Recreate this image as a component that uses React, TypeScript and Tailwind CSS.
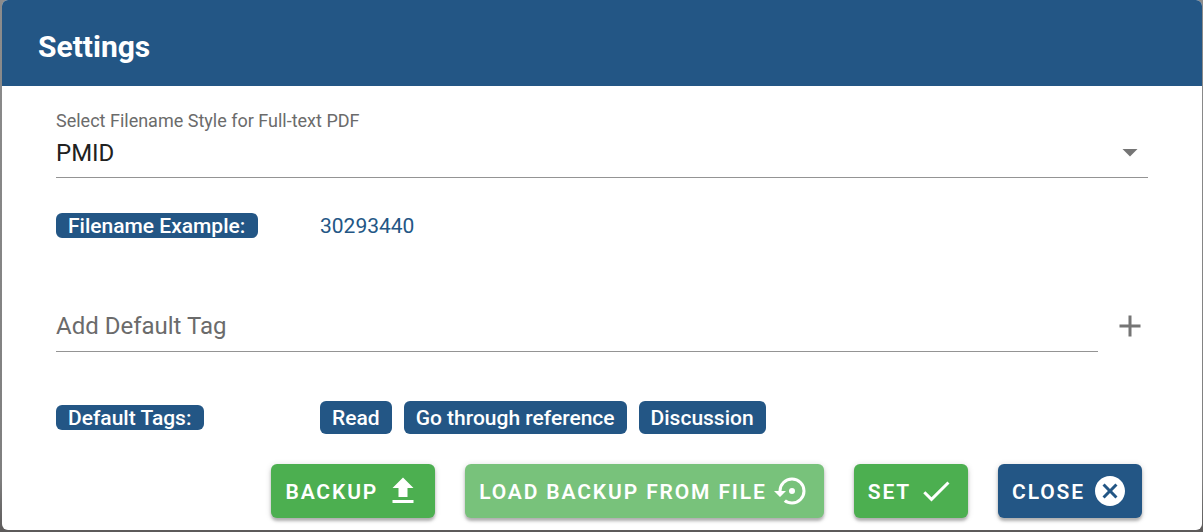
import { useState, type ReactNode } from "react";

const FILENAME_STYLES = [
  { label: "PMID", example: "30293440" },
  { label: "Title", example: "Full title of the article" },
];

const ICONS = {
  upload: "M9,16V10H5L12,3L19,10H15V16H9M5,20V18H19V20H5Z",
  restore:
    "M12,3A9,9 0 0,0 3,12H0L4,16L8,12H5A7,7 0 0,1 12,5A7,7 0 0,1 19,12A7,7 0 0,1 12,19C10.5,19 9.09,18.5 7.94,17.7L6.5,19.14C8.04,20.3 9.94,21 12,21A9,9 0 0,0 21,12A9,9 0 0,0 12,3M14,12A2,2 0 0,0 12,10A2,2 0 0,0 10,12A2,2 0 0,0 12,14A2,2 0 0,0 14,12Z",
  check: "M21,7L9,19L3.5,13.5L4.91,12.09L9,16.17L19.59,5.59L21,7Z",
  closeCircle:
    "M12,2C17.53,2 22,6.47 22,12C22,17.53 17.53,22 12,22C6.47,22 2,17.53 2,12C2,6.47 6.47,2 12,2M15.59,7L12,10.59L8.41,7L7,8.41L10.59,12L7,15.59L8.41,17L12,13.41L15.59,17L17,15.59L13.41,12L17,8.41L15.59,7Z",
  plus: "M19,13H13V19H11V13H5V11H11V5H13V11H19V13Z",
  menuDown: "M7,10L12,15L17,10H7Z",
};

function Icon({ name, className = "" }: { name: keyof typeof ICONS; className?: string }) {
  return (
    <svg viewBox="0 0 24 24" fill="currentColor" aria-hidden="true" className={`size-9 shrink-0 ${className}`}>
      <path d={ICONS[name]} />
    </svg>
  );
}

function ActionButton({
  icon,
  color,
  children,
}: {
  icon: keyof typeof ICONS;
  color: string;
  children: ReactNode;
}) {
  return (
    <button
      type="button"
      className={`flex h-[54px] items-center gap-[7px] rounded-md px-3.5 text-[21px] font-semibold tracking-[0.089em] whitespace-nowrap text-white uppercase shadow-[0_3px_3px_rgba(0,0,0,0.25),0_1px_6px_rgba(0,0,0,0.15)] ${color}`}
    >
      <span className="pt-0.5 leading-8">{children}</span>
      <Icon name={icon} />
    </button>
  );
}

function RowLabel({ children }: { children: ReactNode }) {
  return (
    <div className="w-[264px] shrink-0">
      <span className="inline-block rounded-md bg-[#235685] pt-px pr-[13px] pl-3 align-top text-[21px] leading-6 font-medium text-white">
        {children}
      </span>
    </div>
  );
}

export default function App() {
  const [style, setStyle] = useState("PMID");
  const [tag, setTag] = useState("");
  const [tags, setTags] = useState(["Read", "Go through reference", "Discussion"]);
  const example = FILENAME_STYLES.find((s) => s.label === style)?.example;

  const addTag = () => {
    if (tag.trim()) {
      setTags([...tags, tag.trim()]);
      setTag("");
    }
  };

  return (
    <div className="bg-linear-to-b from-[#8c8c8c] via-[#7f7f7f] via-90% to-[#5c5a5a] pr-px pb-0.5 pl-0.5 font-[Roboto,sans-serif]">
      <section aria-labelledby="title" className="overflow-hidden rounded-md bg-white">
        <header className="bg-[#235685] px-9 pt-6 pb-[17px]">
          <h1 id="title" className="text-[30px] leading-[45px] font-bold text-white">
            Settings
          </h1>
        </header>

        <div className="px-[54px] pt-6">
          <label htmlFor="filename-style" className="block text-lg leading-[22px] text-[#6b6b6b]">
            Select Filename Style for Full-text PDF
          </label>
          <div className="relative border-b border-[#949494]">
            <select
              id="filename-style"
              value={style}
              onChange={(e) => setStyle(e.target.value)}
              className="block h-[45px] w-full appearance-none bg-transparent pb-1 text-2xl text-[#212121] outline-none"
            >
              {FILENAME_STYLES.map((s) => (
                <option key={s.label}>{s.label}</option>
              ))}
            </select>
            <Icon name="menuDown" className="pointer-events-none absolute top-0.5 right-0 text-[#757575]" />
          </div>

          <div className="flex items-center pt-[35px]">
            <RowLabel>Filename Example:</RowLabel>
            <span className="pt-px text-[21px] leading-6 text-[#235685]">{example}</span>
          </div>

          <div className="flex items-end gap-3.5 pt-[61px]">
            <input
              aria-label="Add Default Tag"
              placeholder="Add Default Tag"
              value={tag}
              onChange={(e) => setTag(e.target.value)}
              className="h-[53px] min-w-0 flex-1 border-b border-[#949494] pt-0.5 text-2xl text-[#212121] outline-none placeholder:text-[#6b6b6b]"
            />
            <button type="button" aria-label="Add tag" onClick={addTag} className="mb-2 text-[#757575]">
              <Icon name="plus" />
            </button>
          </div>

          <div className="flex items-center pt-[49px]">
            <RowLabel>Default Tags:</RowLabel>
            <ul className="flex flex-wrap gap-3">
              {tags.map((t) => (
                <li
                  key={t}
                  className="rounded-md bg-[#235685] px-3 pt-px text-[21px] leading-8 font-medium text-white"
                >
                  {t}
                </li>
              ))}
            </ul>
          </div>
        </div>

        <footer className="flex justify-end gap-[30px] pt-[30px] pr-[60px] pb-3">
          <ActionButton icon="upload" color="bg-[#4caf50]">Backup</ActionButton>
          <ActionButton icon="restore" color="bg-[#78c27b]">Load backup from file</ActionButton>
          <ActionButton icon="check" color="bg-[#4caf50]">Set</ActionButton>
          <ActionButton icon="closeCircle" color="bg-[#235685]">Close</ActionButton>
        </footer>
      </section>
    </div>
  );
}
